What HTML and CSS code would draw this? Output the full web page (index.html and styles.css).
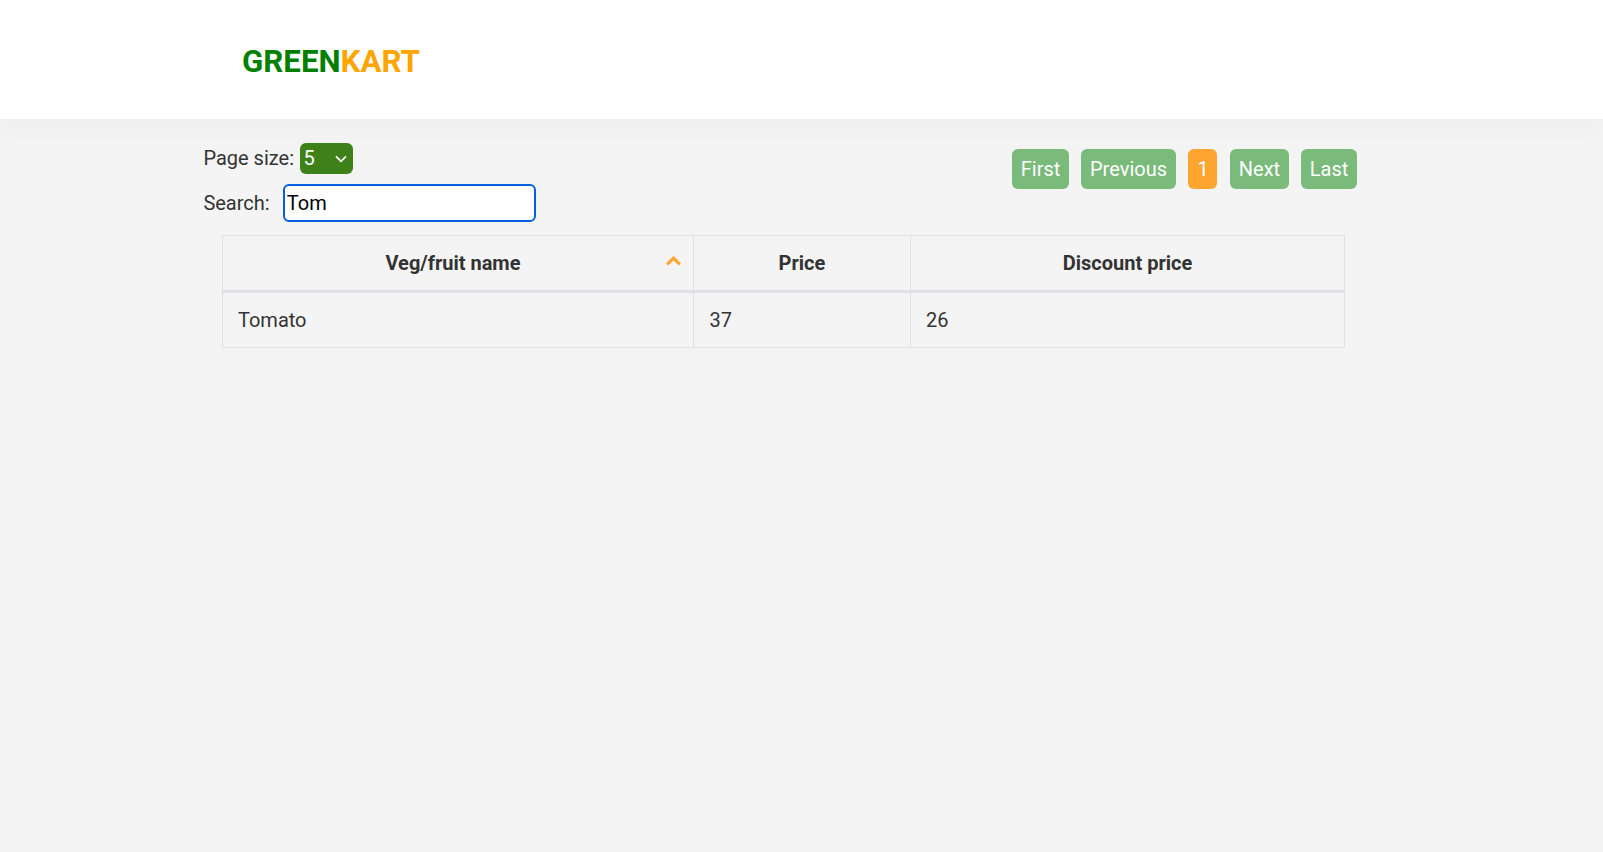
FILE: index.html
```html
<!DOCTYPE html>
<html lang="en">
<head>
<meta charset="utf-8">
<title>GreenKart</title>
<link rel="stylesheet" href="styles.css">
</head>
<body>
<header class="header"><div class="brand">GREEN<span class="brand-accent">KART</span></div></header>
<main class="content">
  <div class="toolbar">
    <div class="filters">
      <div class="field page-size"><span>Page size:</span>
        <button class="select" type="button"><span>5</span><svg class="chevron" viewBox="0 0 12 8"><path d="M1 1.3 6 6.3 11 1.3"/></svg></button>
      </div>
      <div class="field search"><label for="search">Search:</label><input id="search" class="search-input" type="text" value="Tom"></div>
    </div>
    <nav class="pagination">
      <a class="page first">First</a><a class="page previous">Previous</a><a class="page current">1</a><a class="page next">Next</a><a class="page last">Last</a>
    </nav>
  </div>
  <table class="table">
    <colgroup><col class="col-name"><col class="col-price"><col class="col-discount"></colgroup>
    <thead><tr>
      <th><div class="sort-head"><span>Veg/fruit name</span><svg class="sort-icon" viewBox="0 0 15 10"><path d="M1.2 8.4 7.5 2.1 13.8 8.4"/></svg></div></th>
      <th>Price</th><th>Discount price</th>
    </tr></thead>
    <tbody><tr><td>Tomato</td><td class="price">37</td><td>26</td></tr></tbody>
  </table>
</main>
</body>
</html>
```
FILE: styles.css
```css
* { box-sizing: border-box; }
body {
  margin: 0;
  min-height: 100vh;
  background: #f4f4f4;
  color: #333;
  font: 20px/30px Roboto, sans-serif;
}
.header {
  height: 119px;
  padding: 43px 0 0 242px;
  background: #fff;
  box-shadow: 0 1px 30px rgba(0, 0, 0, 0.05);
}
.brand { color: green; font-size: 31.25px; line-height: 38px; font-weight: 700; }
.brand-accent { color: orange; }
.content { padding: 24px 246px 0 203.4px; }
.toolbar { display: flex; justify-content: space-between; height: 92px; }
.field { display: flex; align-items: center; }
.page-size { height: 31px; gap: 5.6px; line-height: 29px; }
.page-size > span, .select > span { line-height: 29px; margin-bottom: 2px; padding-top: 1px; }
.page-size > span { height: 29px; }
.select > span { height: 29px; }
.select {
  display: flex;
  align-items: center;
  justify-content: space-between;
  width: 53px;
  height: 31px;
  padding: 0 5.4px 0 4px;
  border: 0;
  border-radius: 6px;
  background: #3e8119;
  color: #fff;
  font: inherit;
}
.chevron { width: 12px; height: 8px; margin-top: 1px; fill: none; stroke: #fff; stroke-width: 1.8; }
.search { height: 38px; margin-top: 10px; gap: 13.6px; }
.search-input {
  width: 253px;
  height: 38px;
  padding: 0 1.6px;
  border: 2px solid #0060df;
  border-radius: 6px;
  outline: 0;
  background: #fff;
  color: #000;
  font: inherit;
}
.pagination { display: flex; padding-top: 6px; gap: 12px; }
.page {
  height: 40px;
  border-radius: 6px;
  background: #7aba7a;
  color: #fff;
  line-height: 40px;
  text-align: center;
}
.first { width: 57px; }
.previous { width: 95px; }
.current { width: 29px; margin-right: 1px; padding-left: 1px; background: #fea530; }
.next { width: 59px; }
.last { width: 56px; }
.table { width: 1123px; margin-left: 18.6px; table-layout: fixed; border-collapse: separate; border-spacing: 0; border: solid #dee2e6; border-width: 1px 0 0 1px; }
.col-name { width: 471px; }
.col-price { width: 217px; }
.col-discount { width: 434px; }
.table th, .table td { padding: 0 15px; border: solid #dee2e6; border-width: 0 1px 1px 0; }
.table th { height: 57px; border-bottom-width: 3px; font-weight: 700; text-align: center; }
.table td { height: 55px; }
.table .price { padding-left: 15.6px; }
.sort-head { display: grid; grid-template-columns: 15px 1fr 15px; align-items: center; }
.sort-head span { grid-column: 2; margin-left: -10px; }
.sort-icon { width: 15px; height: 10px; margin: -5px 0 0 3px; fill: none; stroke: #fea530; stroke-width: 3.1; }
```
